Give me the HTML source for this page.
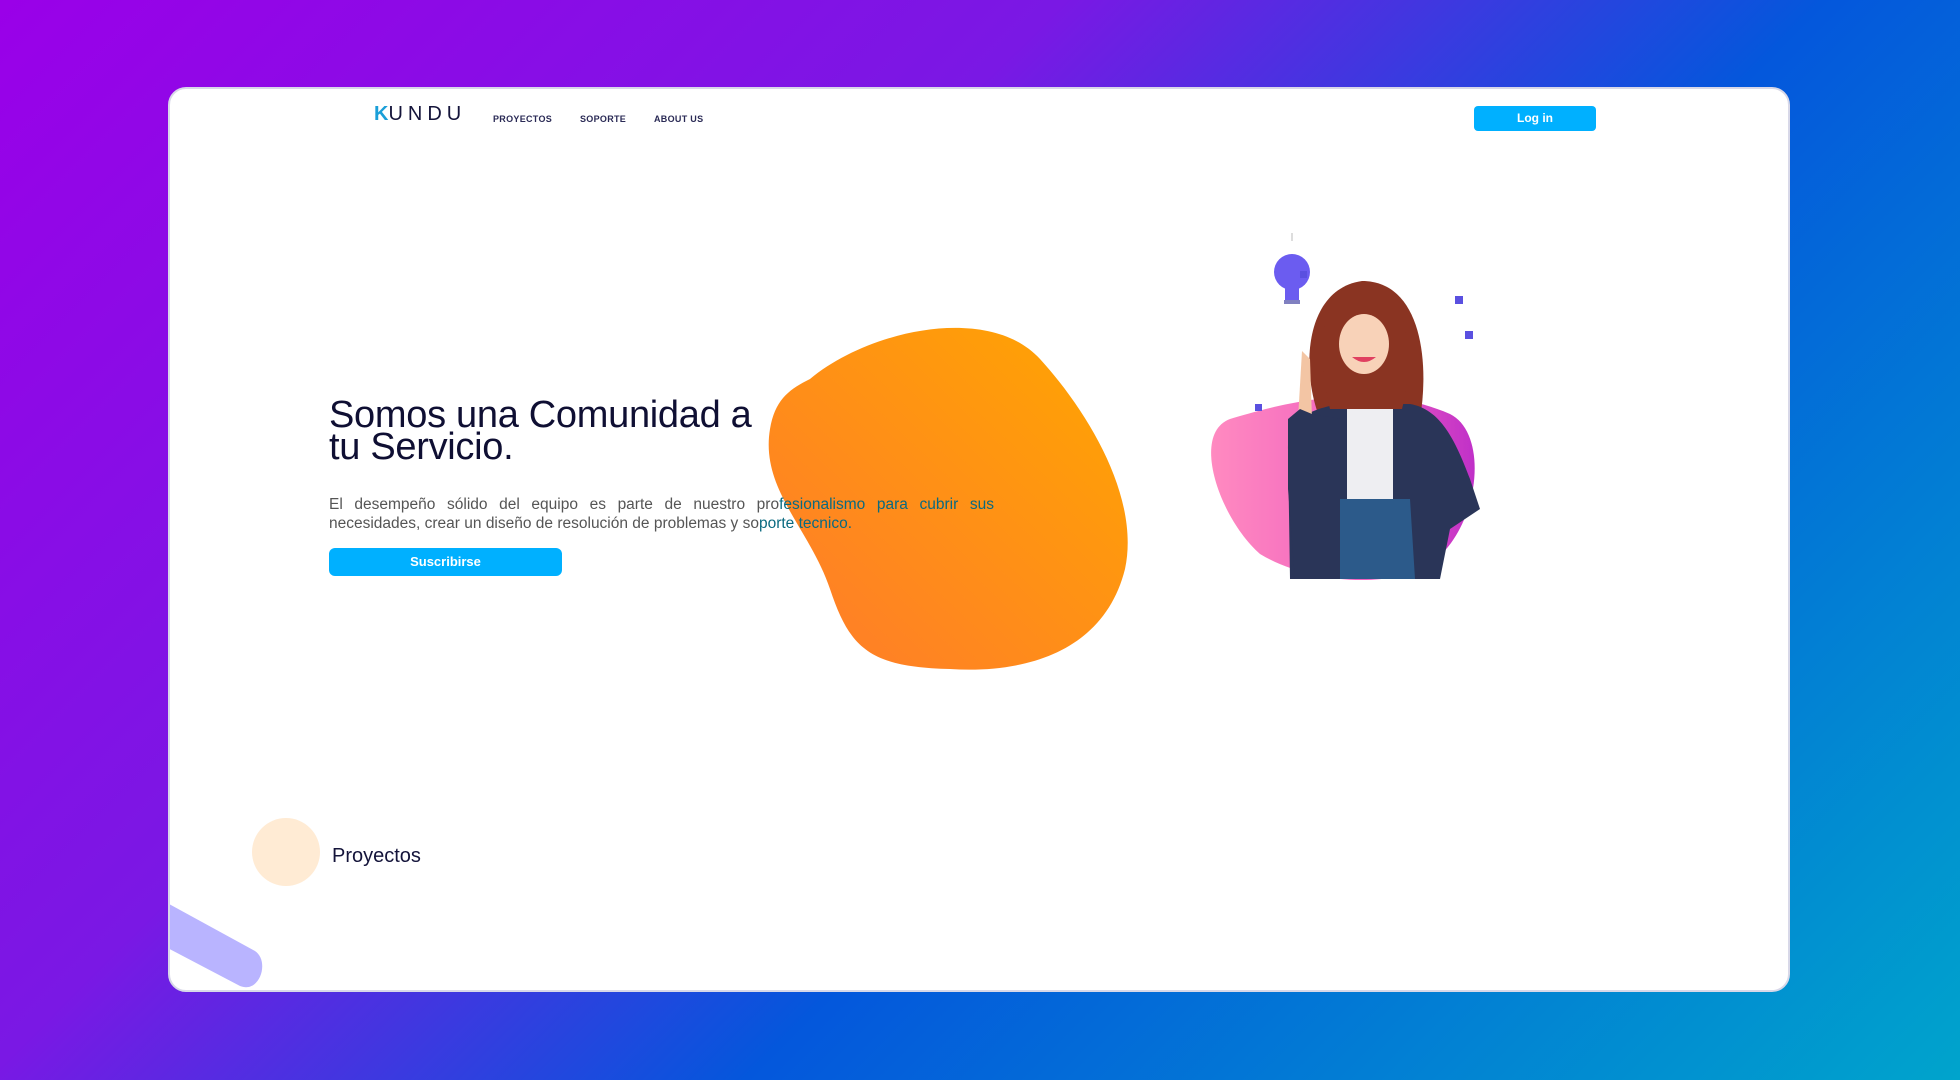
<!DOCTYPE html>
<html><head><meta charset="utf-8"><style>
*{margin:0;padding:0;box-sizing:border-box}
body{width:1960px;height:1080px;overflow:hidden;font-family:"Liberation Sans",sans-serif;
background:linear-gradient(135deg,#9a00e8 0%,#7a18e4 35%,#0457dc 60%,#00a4cc 100%);position:relative}
.card{position:absolute;left:168px;top:87px;width:1622px;height:905px;background:#fff;border-radius:18px;overflow:hidden;border:2px solid #d8d8e8}
.abs{position:absolute}
.nav{font-size:9px;color:#2a2a55;letter-spacing:.3px;top:25px;font-weight:bold}
.j{text-align:justify;text-align-last:justify}
</style></head><body>
<div class="card">
 <svg class="abs" style="left:0;top:0" width="1622" height="905">
  <defs>
   <linearGradient id="og" x1="1" y1="0" x2="0" y2="1"><stop offset="0" stop-color="#ffa600"/><stop offset="1" stop-color="#ff7a2c"/></linearGradient>
   <linearGradient id="pg" x1="0" y1="0" x2="1" y2="0"><stop offset="0" stop-color="#ff8ac0"/><stop offset=".6" stop-color="#f060c0"/><stop offset="1" stop-color="#c030c8"/></linearGradient>
  </defs>
  <path d="M640 290 C700 240 820 215 870 270 C920 325 970 410 955 480 C935 560 860 585 780 580 C700 578 680 560 660 500 C640 440 590 400 600 340 C605 310 620 300 640 290Z" fill="url(#og)"/>
  <path d="M1060 330 C1110 315 1200 290 1280 325 C1320 345 1310 440 1260 475 C1220 500 1140 495 1090 465 C1050 430 1020 345 1060 330Z" fill="url(#pg)"/>
  <!-- bulb -->
  <circle cx="1122" cy="183" r="18" fill="#6b5cf0"/>
  <rect x="1115" y="197" width="14" height="14" fill="#6b5cf0"/>
  <rect x="1114" y="211" width="16" height="4" fill="#8080c0"/>
  <line x1="1122" y1="144" x2="1122" y2="152" stroke="#ddd" stroke-width="2"/>
  <!-- woman -->
  <path d="M1150 330 C1130 280 1135 200 1192 192 C1250 192 1260 270 1250 330Z" fill="#8a3422"/>
  <path d="M1120 490 L1118 360 C1118 330 1140 320 1170 315 L1240 315 C1270 320 1285 350 1300 390 L1310 420 L1280 440 L1270 490Z" fill="#2a3558"/>
  <rect x="1177" y="315" width="46" height="175" fill="#eeeef2"/>
  <path d="M1170 410 L1240 410 L1245 490 L1170 490Z" fill="#2c5a8a"/>
  <path d="M1128 330 L1142 330 L1140 270 L1132 262Z" fill="#f3c5a4"/>
  <path d="M1118 400 L1125 490 L1170 490 L1170 330 L1142 325 L1130 320 L1118 330Z" fill="#2a3558"/>
  <path d="M1160 320 C1150 280 1150 240 1160 220 L1230 220 C1240 250 1240 290 1232 320Z" fill="#8a3422"/>
  <ellipse cx="1194" cy="255" rx="25" ry="30" fill="#f8d2b8"/>
  <path d="M1182 268 Q1194 278 1206 268Z" fill="#e04060"/>
  <rect x="1130" y="182" width="7" height="7" fill="#5a50e0"/><rect x="1285" y="207" width="8" height="8" fill="#5a50e0"/>
  <rect x="1295" y="242" width="8" height="8" fill="#5a50e0"/><rect x="1085" y="315" width="7" height="7" fill="#5a50e0"/>
  <!-- bottom bar -->
  <path d="M-10 810 L85 862 C100 872 90 905 70 897 L-10 855Z" fill="#b9b4ff"/>
  <circle cx="116" cy="763" r="34" fill="#ffebd4"/>
 </svg>
 <div class="abs" style="left:204px;top:14px;font-size:20px;letter-spacing:5px;color:#14143a"><span style="color:#1a9fd8;font-weight:bold;letter-spacing:0">K</span>UNDU</div>
 <div class="abs nav" style="left:323px">PROYECTOS</div>
 <div class="abs nav" style="left:410px">SOPORTE</div>
 <div class="abs nav" style="left:484px">ABOUT US</div>
 <div class="abs" style="left:1304px;top:17px;width:122px;height:25px;background:#00b0ff;border-radius:4px;color:#fff;font-size:12px;font-weight:bold;text-align:center;line-height:25px">Log in</div>
 <div class="abs" style="left:159px;top:310px;font-size:38px;line-height:32px;color:#0f0f33;letter-spacing:-.3px">Somos una Comunidad a<br>tu Servicio.</div>
 <div class="abs" style="left:159px;top:406px;width:665px;font-size:15.5px;line-height:19px;color:#555">
  <div class="j">El desempeño sólido del equipo es parte de nuestro pro<span style="color:#0a6a80">fesionalismo para cubrir sus</span></div>
  <div>necesidades, crear un diseño de resolución de problemas y so<span style="color:#0a6a80">porte tecnico.</span></div>
 </div>
 <div class="abs" style="left:159px;top:459px;width:233px;height:28px;background:#00b0ff;border-radius:6px;color:#fff;font-size:13px;font-weight:bold;text-align:center;line-height:28px">Suscribirse</div>
 <div class="abs" style="left:162px;top:756px;font-size:20px;color:#14143a">Proyectos</div>
</div>
</body></html>
